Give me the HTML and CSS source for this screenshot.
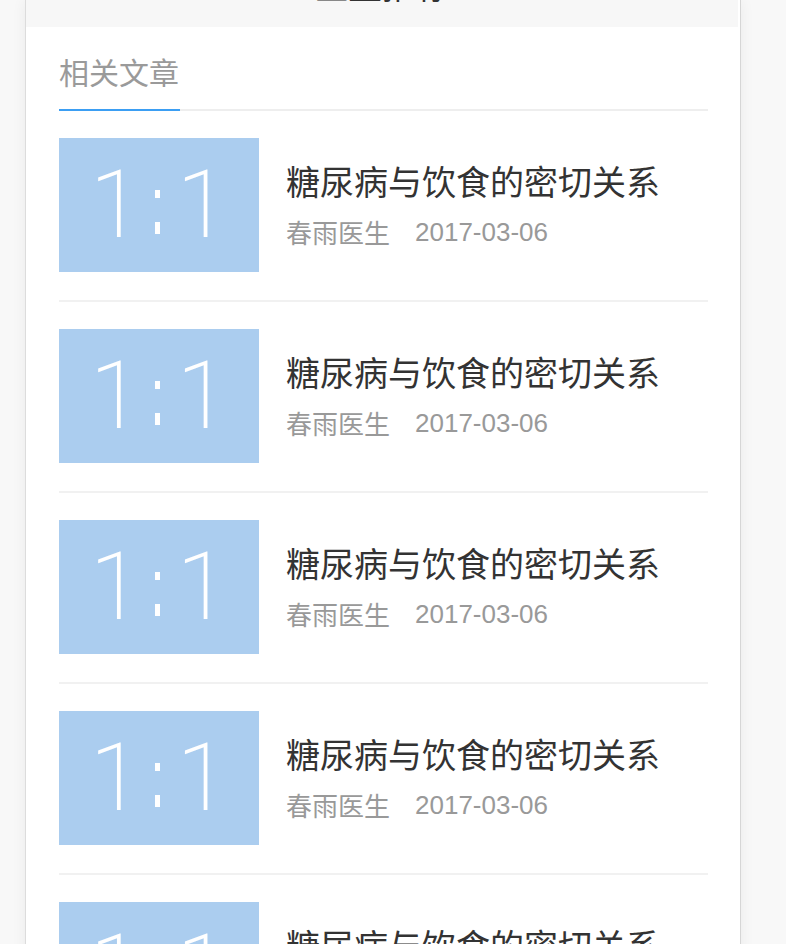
FILE: index.html
```html
<!DOCTYPE html>
<html lang="zh">
<head>
<meta charset="utf-8">
<title>相关文章</title>
<link rel="stylesheet" href="styles.css">
</head>
<body>
<div class="page">
  <div class="card">
    <div class="header"><div class="header-title">医生推荐</div></div>
    <div class="section">
      <div class="tabs"><div class="tab">相关文章</div></div>
      <ul class="list">
        <li class="item">
          <div class="thumb"><span>1</span><span class="colon" aria-label=":"></span><span>1</span></div>
          <div class="info"><div class="title">糖尿病与饮食的密切关系</div><div class="meta"><span>春雨医生</span><span class="date">2017-03-06</span></div></div>
        </li>
        <li class="item">
          <div class="thumb"><span>1</span><span class="colon" aria-label=":"></span><span>1</span></div>
          <div class="info"><div class="title">糖尿病与饮食的密切关系</div><div class="meta"><span>春雨医生</span><span class="date">2017-03-06</span></div></div>
        </li>
        <li class="item">
          <div class="thumb"><span>1</span><span class="colon" aria-label=":"></span><span>1</span></div>
          <div class="info"><div class="title">糖尿病与饮食的密切关系</div><div class="meta"><span>春雨医生</span><span class="date">2017-03-06</span></div></div>
        </li>
        <li class="item">
          <div class="thumb"><span>1</span><span class="colon" aria-label=":"></span><span>1</span></div>
          <div class="info"><div class="title">糖尿病与饮食的密切关系</div><div class="meta"><span>春雨医生</span><span class="date">2017-03-06</span></div></div>
        </li>
        <li class="item">
          <div class="thumb"><span>1</span><span class="colon" aria-label=":"></span><span>1</span></div>
          <div class="info"><div class="title">糖尿病与饮食的密切关系</div><div class="meta"><span>春雨医生</span><span class="date">2017-03-06</span></div></div>
        </li>
      </ul>
    </div>
  </div>
</div>
</body>
</html>
```
FILE: styles.css
```css
html, body {
  margin: 0;
  padding: 0;
  background: #f8f8f8;
  font-family: "Liberation Sans", "Noto Sans CJK SC", sans-serif;
}
.page {
  padding-left: 25px;
  width: 716px;
}
.card {
  background: #fff;
  border-left: 1px solid #dcdcdc;
  border-right: 1px solid #d6d6d6;
  box-shadow: 0 0 14px rgba(0, 0, 0, 0.06);
  min-height: 1200px;
}
.header {
  height: 27px;
  background: #f7f7f7;
  overflow: hidden;
  margin-right: 2px;
  display: flex;
  justify-content: center;
}
.header-title {
  font-family: "Noto Sans CJK SC", sans-serif;
  font-size: 34px;
  line-height: 40px;
  color: #333;
  margin-top: -35px;
}
.section {
  padding: 0 32px 0 33px;
}
.tabs {
  display: flex;
  border-bottom: 2px solid #eeeeee;
  padding-top: 24px;
}
.tab {
  font-family: "Noto Sans CJK SC", sans-serif;
  font-size: 30px;
  line-height: 40px;
  color: #9a9a9a;
  padding-bottom: 18px;
  border-bottom: 2px solid #3b9ef3;
  margin-bottom: -2px;
  width: 121px;
}
.list {
  list-style: none;
  margin: 0;
  padding: 0;
}
.item {
  display: flex;
  padding: 27px 0 28px;
  border-bottom: 2px solid #f1f1f1;
}
.thumb {
  width: 200px;
  height: 134px;
  flex: none;
  background: #abcdef;
  color: #fff;
  font-family: Roboto, sans-serif;
  font-weight: 200;
  font-size: 94px;
  display: flex;
  align-items: center;
  justify-content: center;
  line-height: 1;
  box-sizing: border-box;
}
.colon {
  width: 5px;
  height: 44px;
  margin: 14px 17px 0 13px;
  background:
    linear-gradient(#fff, #fff) top / 5px 8px no-repeat,
    linear-gradient(#fff, #fff) bottom / 5px 12px no-repeat;
}
.info {
  margin-left: 27px;
  padding-top: 23px;
}
.title {
  font-family: "Noto Sans CJK SC", sans-serif;
  font-size: 34px;
  line-height: 40px;
  color: #333;
  white-space: nowrap;
}
.meta {
  margin-top: 15px;
  font-size: 26px;
  line-height: 32px;
  color: #999;
  display: flex;
}
.meta span:first-child {
  font-family: "Noto Sans CJK SC", sans-serif;
}
.date {
  margin-left: 25px;
  font-family: "Liberation Sans", sans-serif;
}
```
